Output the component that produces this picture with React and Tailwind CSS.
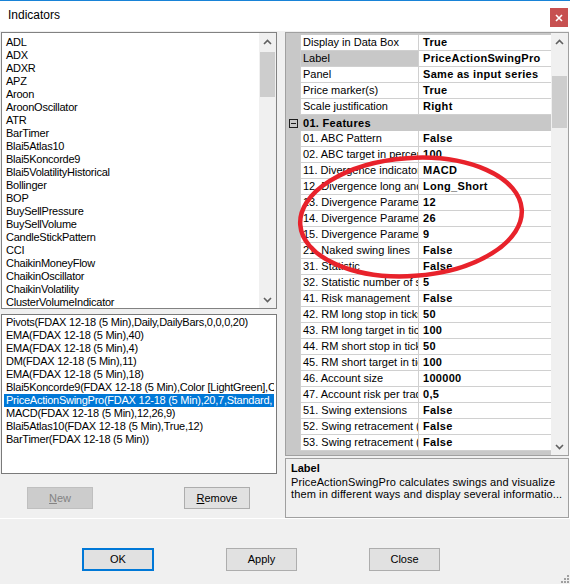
import React from 'react'

const INDICATORS = [
  'ADL', 'ADX', 'ADXR', 'APZ', 'Aroon', 'AroonOscillator', 'ATR', 'BarTimer', 'Blai5Atlas10',
  'Blai5Koncorde9', 'Blai5VolatilityHistorical', 'Bollinger', 'BOP', 'BuySellPressure',
  'BuySellVolume', 'CandleStickPattern', 'CCI', 'ChaikinMoneyFlow', 'ChaikinOscillator',
  'ChaikinVolatility', 'ClusterVolumeIndicator',
]

const APPLIED = [
  'Pivots(FDAX 12-18 (5 Min),Daily,DailyBars,0,0,0,20)',
  'EMA(FDAX 12-18 (5 Min),40)',
  'EMA(FDAX 12-18 (5 Min),4)',
  'DM(FDAX 12-18 (5 Min),11)',
  'EMA(FDAX 12-18 (5 Min),18)',
  'Blai5Koncorde9(FDAX 12-18 (5 Min),Color [LightGreen],Color [Blue],1)',
  'PriceActionSwingPro(FDAX 12-18 (5 Min),20,7,Standard,',
  'MACD(FDAX 12-18 (5 Min),12,26,9)',
  'Blai5Atlas10(FDAX 12-18 (5 Min),True,12)',
  'BarTimer(FDAX 12-18 (5 Min))',
]

// [name, value, kind]
const PROPS = [
  ['Display in Data Box', 'True'],
  ['Label', 'PriceActionSwingPro', 'selected'],
  ['Panel', 'Same as input series'],
  ['Price marker(s)', 'True'],
  ['Scale justification', 'Right'],
  ['01. Features', null, 'category'],
  ['01. ABC Pattern', 'False'],
  ['02. ABC target in percent', '100'],
  ['11. Divergence indicator', 'MACD'],
  ['12. Divergence long and short', 'Long_Short'],
  ['13. Divergence Parameter 1', '12'],
  ['14. Divergence Parameter 2', '26'],
  ['15. Divergence Parameter 3', '9'],
  ['21. Naked swing lines', 'False'],
  ['31. Statistic', 'False'],
  ['32. Statistic number of swings', '5'],
  ['41. Risk management', 'False'],
  ['42. RM long stop in ticks', '50'],
  ['43. RM long target in ticks', '100'],
  ['44. RM short stop in ticks', '50'],
  ['45. RM short target in ticks', '100'],
  ['46. Account size', '100000'],
  ['47. Account risk per trade', '0,5'],
  ['51. Swing extensions', 'False'],
  ['52. Swing retracement (current)', 'False'],
  ['53. Swing retracement (last)', 'False'],
]

function Chevron({ up }) {
  return (
    <svg width="9" height="6" viewBox="0 0 9 6" className="block">
      <polyline
        points={up ? '1,5 4.5,1.5 8,5' : '1,1 4.5,4.5 8,1'}
        fill="none"
        stroke="#606060"
        strokeWidth="1.6"
      />
    </svg>
  )
}

function ScrollBar({ thumbTop, thumbHeight }) {
  return (
    <div className="w-[17px] shrink-0 bg-[#f0f0f0] flex flex-col items-center">
      <div className="h-[17px] w-full flex items-center justify-center shrink-0">
        <Chevron up />
      </div>
      <div className="flex-1 w-full px-[1px]">
        <div className="bg-[#cdcdcd] w-full" style={{ marginTop: thumbTop, height: thumbHeight }} />
      </div>
      <div className="h-[17px] w-full flex items-center justify-center shrink-0">
        <Chevron />
      </div>
    </div>
  )
}

function Button({ children, disabled, focused, className = '' }) {
  return (
    <div
      className={`h-[22px] flex items-center justify-center text-[11px] ${
        disabled
          ? 'bg-[#cccccc] border border-[#bfbfbf] text-[#838383]'
          : focused
          ? 'bg-[#e1e1e1] border-2 border-[#0078d7] text-black'
          : 'bg-[#e1e1e1] border border-[#adadad] text-black'
      } ${className}`}
    >
      {children}
    </div>
  )
}

export default function App() {
  return (
    <div className="relative w-[570px] h-[584px] bg-[#f0f0f0] overflow-hidden font-['Liberation_Sans',Arial,sans-serif] text-black select-none">
      {/* Title bar */}
      <div className="h-[31px] bg-white border-t border-[#1883d7] flex items-start justify-between">
        <span className="pl-[8px] pt-[7px] text-[12px] leading-[15px]">Indicators</span>
        <div className="mt-[7px] mr-[2px] w-[18px] h-[19px] bg-[#c75050] flex items-center justify-center">
          <svg width="8" height="8" viewBox="0 0 8 8">
            <path d="M1 1 L7 7 M7 1 L1 7" stroke="white" strokeWidth="1.6" />
          </svg>
        </div>
      </div>

      {/* Main split area */}
      <div className="h-[488px] flex border-b border-white border-r">
        {/* Left column */}
        <div className="w-[285px] shrink-0 pl-[1px] pt-[1px] flex flex-col">
          <div className="w-[276px] h-[277px] border border-[#828282] bg-white flex">
            <div className="flex-1 pt-[3px] pl-[4px] overflow-hidden">
              {INDICATORS.map(n => (
                <div key={n} className="h-[13px] leading-[13px] text-[11px] tracking-[-0.25px] whitespace-nowrap">{n}</div>
              ))}
            </div>
            <ScrollBar thumbTop={2} thumbHeight={45} />
          </div>

          <div className="mt-[5px] w-[276px] h-[160px] border border-[#7a7a7a] bg-white pt-[1px] px-[2px] overflow-hidden">
            {APPLIED.map((a, i) => (
              <div
                key={a}
                className={`h-[13px] leading-[13px] text-[11px] tracking-[-0.25px] whitespace-nowrap overflow-hidden pl-[2px] ${
                  i === 6 ? 'bg-[#0078d7] text-white' : ''
                }`}
              >
                {a}
              </div>
            ))}
          </div>

          <div className="mt-[13px] flex">
            <Button disabled className="ml-[26px] w-[66px]">
              <span><span className="underline">N</span>ew</span>
            </Button>
            <Button className="ml-[91px] w-[66px]">
              <span><span className="underline">R</span>emove</span>
            </Button>
          </div>
        </div>

        {/* Right column */}
        <div className="w-[284px] shrink-0 pt-[1px] flex flex-col">
          <div className="h-[424px] border border-[#a0a0a0] bg-white flex">
            <div className="flex-1 bg-[#c8c8c8] pt-[2px] flex flex-col text-[11px]">
              {PROPS.map(([name, value, kind]) =>
                kind === 'category' ? (
                  <div key={name} className="h-[16px] flex items-center bg-[#c8c8c8]">
                    <div className="w-[14px] shrink-0 flex items-center justify-center">
                      <div className="w-[9px] h-[9px] border border-[#1e1e1e] flex items-center justify-center">
                        <div className="w-[5px] h-px bg-[#1e1e1e]" />
                      </div>
                    </div>
                    <span className="pl-[3px] font-bold tracking-[0.3px] leading-[16px]">{name}</span>
                  </div>
                ) : (
                  <div key={name} className="h-[16px] flex">
                    <div className="w-[14px] shrink-0" />
                    <div
                      className={`w-[119px] shrink-0 border-l border-r border-b border-[#d0d0d0] pl-[2px] leading-[15px] whitespace-nowrap overflow-hidden ${
                        kind === 'selected' ? 'bg-[#c8c8c8]' : 'bg-white'
                      }`}
                    >
                      {name}
                    </div>
                    <div className="flex-1 bg-white border-b border-[#d0d0d0] pl-[4px] leading-[15px] font-bold tracking-[0.3px] whitespace-nowrap overflow-hidden">
                      {value}
                    </div>
                  </div>
                )
              )}
            </div>
            <ScrollBar thumbTop={26} thumbHeight={52} />
          </div>

          <div className="mt-[2px] h-[60px] border border-[#a0a0a0] bg-[#f0f0f0] pl-[5px] pt-[2px] text-[11px]">
            <div className="font-bold leading-[14px]">Label</div>
            <div className="mt-[1px] leading-[12px] tracking-[0.12px] whitespace-nowrap">
              PriceActionSwingPro calculates swings and visualize
            </div>
            <div className="leading-[12px] tracking-[0.12px] whitespace-nowrap">
              them in different ways and display several informatio...
            </div>
          </div>
        </div>
      </div>

      {/* Bottom buttons */}
      <div className="relative h-[65px] pt-[29px] pl-[82px] flex gap-[72px]">
        <Button focused className="w-[72px] h-[23px]">OK</Button>
        <Button className="w-[71px] h-[23px]">Apply</Button>
        <Button className="w-[71px] h-[23px]">Close</Button>
        <svg width="8" height="8" viewBox="0 0 8 8" className="absolute right-[1px] bottom-[1px]">
          <g fill="#a0a0a0">
            <rect x="6" y="0" width="2" height="2" />
            <rect x="3" y="3" width="2" height="2" />
            <rect x="6" y="3" width="2" height="2" />
            <rect x="0" y="6" width="2" height="2" />
            <rect x="3" y="6" width="2" height="2" />
            <rect x="6" y="6" width="2" height="2" />
          </g>
        </svg>
      </div>

      {/* Red annotation */}
      <svg className="absolute inset-0 pointer-events-none" width="570" height="584" viewBox="0 0 570 584">
        <ellipse
          cx="411"
          cy="217"
          rx="111"
          ry="59"
          transform="rotate(-4 411 217)"
          fill="none"
          stroke="#e8222b"
          strokeWidth="4.5"
        />
      </svg>
    </div>
  )
}
